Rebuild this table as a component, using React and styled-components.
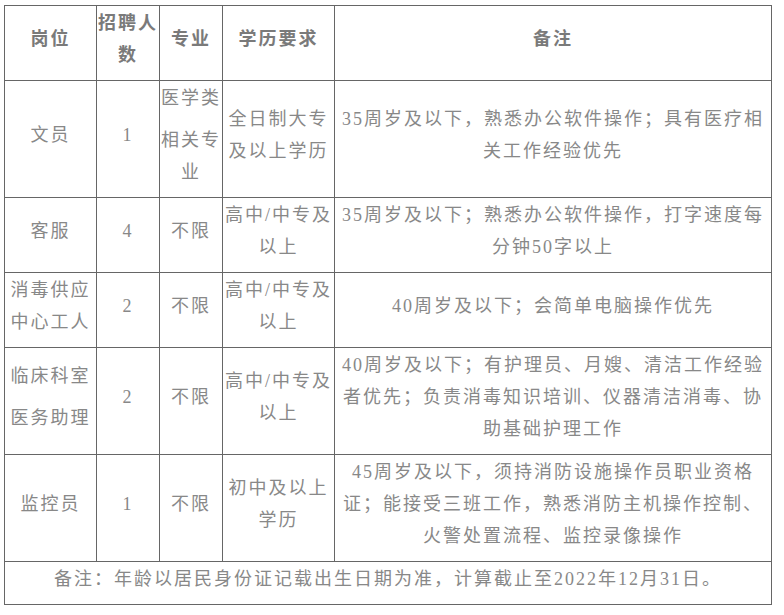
import React from "react";
import styled, { createGlobalStyle } from "styled-components";

const Global = createGlobalStyle`
  html, body { margin: 0; padding: 0; background: #ffffff; }
  body { font-family: "Liberation Serif", "Noto Sans CJK SC", serif; }
`;

const Table = styled.div`
  display: grid;
  grid-template-columns: 91px 62px 62px 111px 436px;
  grid-template-rows: 74px 116px 74px 74px 106px 106px 42px;
  gap: 1px;
  padding: 1px;
  background: #666666;
  width: max-content;
  margin: 5px 0 0 4px;
`;

const Cell = styled.div`
  background: #ffffff;
  display: flex;
  flex-direction: column;
  align-items: center;
  justify-content: center;
  padding-bottom: ${(p) => p.$lift ?? 9}px;
  box-sizing: border-box;
  color: ${(p) => (p.$head ? "#7a7a7a" : "#888888")};
  font-size: 18px;
  letter-spacing: 2px;
  line-height: 32px;
  font-weight: ${(p) => (p.$head ? 700 : 400)};
  grid-column: ${(p) => (p.$full ? "1 / -1" : "auto")};
  text-align: center;
  overflow: visible;
`;

const Para = styled.div`
  white-space: nowrap;
  & + & { margin-top: ${(p) => p.$gap ?? 10}px; }
`;

const Line = styled.div`
  white-space: nowrap;
`;

const header = [[["岗位"]], [["招聘人", "数"]], [["专业"]], [["学历要求"]], [["备注"]]];

const rows = [
  [
    [["文员"]],
    [["1"]],
    [["医学类"], ["相关专", "业"]],
    [["全日制大专", "及以上学历"]],
    [["35周岁及以下，熟悉办公软件操作；具有医疗相", "关工作经验优先"]],
  ],
  [
    [["客服"]],
    [["4"]],
    [["不限"]],
    [["高中/中专及", "以上"]],
    [["35周岁及以下；熟悉办公软件操作，打字速度每", "分钟50字以上"]],
  ],
  [
    [["消毒供应", "中心工人"]],
    [["2"]],
    [["不限"]],
    [["高中/中专及", "以上"]],
    [["40周岁及以下；会简单电脑操作优先"]],
  ],
  [
    [["临床科室"], ["医务助理"]],
    [["2"]],
    [["不限"]],
    [["高中/中专及", "以上"]],
    [
      [
        "40周岁及以下；有护理员、月嫂、清洁工作经验",
        "者优先；负责消毒知识培训、仪器清洁消毒、协",
        "助基础护理工作",
      ],
    ],
  ],
  [
    [["监控员"]],
    [["1"]],
    [["不限"]],
    [["初中及以上", "学历"]],
    [
      [
        "45周岁及以下，须持消防设施操作员职业资格",
        "证；能接受三班工作，熟悉消防主机操作控制、",
        "火警处置流程、监控录像操作",
      ],
    ],
  ],
];

function CellContent({ paras }) {
  return paras.map((lines, i) => (
    <Para key={i}>
      {lines.map((l, j) => (
        <Line key={j}>{l}</Line>
      ))}
    </Para>
  ));
}

export default function App() {
  return (
    <>
      <Global />
      <Table>
        {header.map((c, i) => (
          <Cell key={"h" + i} $head>
            <CellContent paras={c} />
          </Cell>
        ))}
        {rows.map((r, ri) =>
          r.map((c, ci) => (
            <Cell key={ri + "-" + ci}>
              <CellContent paras={c} />
            </Cell>
          ))
        )}
        <Cell $full>
          <CellContent paras={[["备注：年龄以居民身份证记载出生日期为准，计算截止至2022年12月31日。"]]} />
        </Cell>
      </Table>
    </>
  );
}
